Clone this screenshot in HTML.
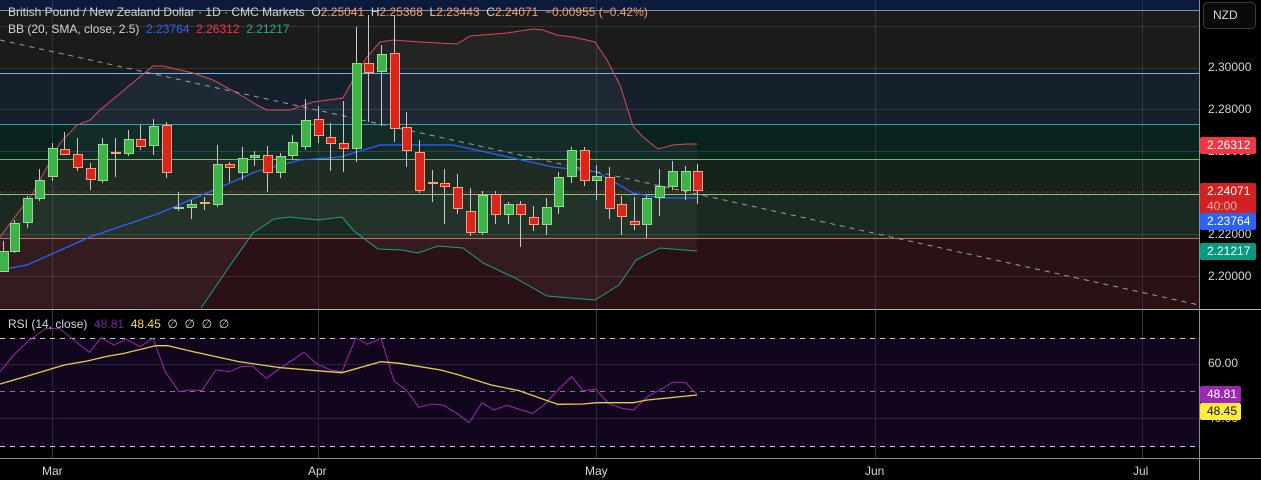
<!DOCTYPE html>
<html><head><meta charset="utf-8"><style>
html,body{margin:0;padding:0;background:#000;width:1261px;height:480px;overflow:hidden;font-family:"Liberation Sans",sans-serif}
.t{position:absolute;font-size:12px;color:#d1d4dc;white-space:nowrap}
.ax{position:absolute;left:1208px;font-size:12px;color:#d1d4dc}
.lb{position:absolute;left:1200px;font-size:12px;color:#fff;padding:1px 6px 1px 7px;border-radius:2px;line-height:15px}
</style></head><body>
<svg id="s" width="1261" height="480" style="position:absolute;left:0;top:0">
<rect x="0" y="0" width="1199" height="10" fill="#0b1a3d"/>
<rect x="0" y="10" width="1199" height="63" fill="#1b1b1c"/>
<rect x="0" y="73" width="1199" height="52" fill="#15202c"/>
<rect x="0" y="125" width="1199" height="34" fill="#0a231f"/>
<rect x="0" y="159" width="1199" height="35" fill="#16231a"/>
<rect x="0" y="194" width="1199" height="44" fill="#1b2a20"/>
<rect x="0" y="238" width="1199" height="71" fill="#2a1115"/>
<g stroke="#ffffff" stroke-opacity="0.12" stroke-width="1">
<line x1="0" y1="26.5" x2="1199" y2="26.5"/><line x1="0" y1="68.5" x2="1199" y2="68.5"/><line x1="0" y1="109.5" x2="1199" y2="109.5"/><line x1="0" y1="151.5" x2="1199" y2="151.5"/><line x1="0" y1="234.5" x2="1199" y2="234.5"/><line x1="0" y1="276.5" x2="1199" y2="276.5"/>
<line x1="52.5" y1="0" x2="52.5" y2="458"/><line x1="318.5" y1="0" x2="318.5" y2="458"/><line x1="596.5" y1="0" x2="596.5" y2="458"/><line x1="875.5" y1="0" x2="875.5" y2="458"/><line x1="1142.5" y1="0" x2="1142.5" y2="458"/>
</g>
<line x1="0" y1="10.5" x2="1199" y2="10.5" stroke="#8a8f99" stroke-width="1"/>
<line x1="0" y1="73.5" x2="1199" y2="73.5" stroke="#64b5f6" stroke-width="1"/>
<line x1="0" y1="124.5" x2="1199" y2="124.5" stroke="#26a69a" stroke-width="1"/>
<line x1="0" y1="159.5" x2="1199" y2="159.5" stroke="#66bb6a" stroke-width="1"/>
<line x1="0" y1="194.5" x2="1199" y2="194.5" stroke="#81c784" stroke-width="1"/>
<line x1="0" y1="238.5" x2="1199" y2="238.5" stroke="#ef5350" stroke-width="1"/>
<polygon fill="#ffffff" fill-opacity="0.045" points="0,237 20,210 33,193 60,143 77,125 90,120 100,110 153,66 163,66 180,70 193,73 213,80 237,93 257,105 267,110 290,110 313,102 343,98 353,80 367,57 380,42 393,40 420,42 457,44 470,36 507,33 533,29 543,30 557,35 573,37 595,42 607,60 620,85 633,126 643,137 658,149 673,145 687,144 697,144 697,251 660,248 636,260 619,285 595,300 547,296 515,278 483,263 463,248 438,246 418,253 402,250 378,249 354,231 342,217 318,220 290,217 274,219 253,233 229,267 201,308 0,308"/>
<polyline fill="none" stroke="#d84a5a" stroke-width="1" points="0,237 20,210 33,193 60,143 77,125 90,120 100,110 153,66 163,66 180,70 193,73 213,80 237,93 257,105 267,110 290,110 313,102 343,98 353,80 367,57 380,42 393,40 420,42 457,44 470,36 507,33 533,29 543,30 557,35 573,37 595,42 607,60 620,85 633,126 643,137 658,149 673,145 687,144 697,144"/>
<polyline fill="none" stroke="#1f9e8a" stroke-width="1" points="201,308 229,267 253,233 274,219 290,217 318,220 342,217 354,231 378,249 402,250 418,253 438,246 463,248 483,263 515,278 547,296 595,300 619,285 636,260 660,248 697,251"/>
<polyline fill="none" stroke="#2962ff" stroke-width="1.3" points="0,270 27,265 90,237 160,213 230,183 255,172 300,160 340,157 380,145 453,145 490,153 553,167 597,172 633,193 660,198 697,198"/>
<line x1="0" y1="40" x2="1199" y2="305" stroke="#9e9e9e" stroke-width="1" stroke-dasharray="5,5"/>
<line x1="0" y1="192" x2="1199" y2="192" stroke="#e04040" stroke-width="1" stroke-dasharray="1,2"/>
<g id="c"></g>
<line x1="0" y1="309.5" x2="1261" y2="309.5" stroke="#b2b5be" stroke-width="1"/>
<rect x="0" y="338" width="1199" height="108" fill="#12061f"/>
<g stroke="#ffffff" stroke-opacity="0.12"><line x1="0" y1="364.5" x2="1199" y2="364.5"/><line x1="0" y1="418.5" x2="1199" y2="418.5"/>
<line x1="52.5" y1="310" x2="52.5" y2="458"/><line x1="318.5" y1="310" x2="318.5" y2="458"/><line x1="596.5" y1="310" x2="596.5" y2="458"/><line x1="875.5" y1="310" x2="875.5" y2="458"/><line x1="1142.5" y1="310" x2="1142.5" y2="458"/></g>
<g stroke="#c8c8c8" stroke-dasharray="5,5" stroke-width="1"><line x1="0" y1="338.5" x2="1199" y2="338.5"/><line x1="0" y1="391.5" x2="1199" y2="391.5" stroke-opacity="0.6"/><line x1="0" y1="446.5" x2="1199" y2="446.5"/></g>
<g transform="translate(0,300) scale(0.45914,0.33333)">
<polyline fill="none" stroke="#9c27b0" stroke-width="1" vector-effect="non-scaling-stroke" points="0,215 30,165 60,125 100,85 130,85 160,120 195,157 220,113 248,135 275,118 305,140 333,115 360,215 390,275 415,270 440,272 470,210 500,215 525,200 550,198 580,235 610,205 635,182 662,157 690,192 720,210 745,215 775,113 800,133 830,115 858,243 885,270 912,322 940,312 965,315 995,340 1022,368 1050,308 1075,330 1105,316 1135,330 1160,340 1185,315 1215,270 1245,230 1270,272 1298,268 1325,310 1355,325 1380,330 1410,290 1440,268 1465,247 1493,247 1518,283"/>
<polyline fill="none" stroke="#e6cf4a" stroke-width="1.3" vector-effect="non-scaling-stroke" points="0,252 60,228 140,195 190,183 230,170 270,160 340,137 365,137 420,155 520,185 610,203 690,212 745,218 830,185 870,190 960,210 1000,225 1070,255 1130,272 1215,313 1270,312 1300,308 1380,308 1410,300 1518,285"/>
</g>
<line x1="0" y1="458.5" x2="1261" y2="458.5" stroke="#8a8f99" stroke-width="1"/>
<line x1="1199.5" y1="0" x2="1199.5" y2="480" stroke="#8a8f99" stroke-width="1"/>
<rect x="1203.5" y="2.5" width="52" height="26" rx="4" fill="#0a0a0a" stroke="#3a3a3a"/>
</svg>
<div class="t" style="left:1213px;top:8px">NZD</div>
<div class="t" style="left:8px;top:5px">British Pound / New Zealand Dollar · 1D · CMC Markets &nbsp;O<span style="color:#f0a070">2.25041</span> &nbsp;H<span style="color:#f0a070">2.25368</span> &nbsp;L<span style="color:#f0a070">2.23443</span> &nbsp;C<span style="color:#f0a070">2.24071</span> &nbsp;<span style="color:#f0a070">−0.00955 (−0.42%)</span></div>
<div class="t" style="left:8px;top:22px">BB (20, SMA, close, 2.5) &nbsp;<span style="color:#2962ff">2.23764</span> &nbsp;<span style="color:#f23645">2.26312</span> &nbsp;<span style="color:#22ab94">2.21217</span></div>
<div class="t" style="left:8px;top:317px">RSI (14, close) &nbsp;<span style="color:#7b1fa2">48.81</span> &nbsp;<span style="color:#fdd835">48.45</span> &nbsp;∅ &nbsp;∅ &nbsp;∅ &nbsp;∅</div>
<div class="ax" style="top:60px">2.30000</div>
<div class="ax" style="top:102px">2.28000</div>
<div class="ax" style="top:144px">2.26000</div>
<div class="ax" style="top:227px">2.22000</div>
<div class="ax" style="top:269px">2.20000</div>
<div class="ax" style="top:356px">60.00</div>
<div class="ax" style="top:411px">40.00</div>
<div class="lb" style="top:137px;background:#f23645">2.26312</div>
<div class="lb" style="top:183px;background:#d32020">2.24071<br><span style="color:#f7b0a8">40:00</span></div>
<div class="lb" style="top:213px;background:#2962ff">2.23764</div>
<div class="lb" style="top:243px;background:#089981">2.21217</div>
<div class="lb" style="top:386px;background:#9c27b0;padding-right:4px">48.81</div>
<div class="lb" style="top:403px;background:#ffeb3b;color:#111;padding-right:4px">48.45</div>
<div class="t" style="left:42px;top:464px">Mar</div>
<div class="t" style="left:308px;top:464px">Apr</div>
<div class="t" style="left:585px;top:464px">May</div>
<div class="t" style="left:865px;top:464px">Jun</div>
<div class="t" style="left:1133px;top:464px">Jul</div>
<script>
var d=[[2.7,251,272,241,272,1],[14.3,223,252,220,253,1],[27.3,198,223,196,228,1],[39.3,180,199,169,201,1],[52.3,148,177,143,181,1],[64.3,149,155,132,155,0],[77.3,154,168,138,171,0],[90.3,168,180,163,190,0],[102.3,144,181,138,183,1],[115.3,152,154,138,177,2],[128.3,139,154,130,156,1],[140,139,147,125,150,0],[153.3,126,146,119,155,1],[166.3,125,173,122,178,0],[178.3,207,209,192,211,1],[191.3,204,208,200,219,1],[204.3,202,204,197,210,2],[216.7,164,205,145,207,1],[229.3,164,168,162,182,0],[242.3,158,173,147,180,1],[254.3,155,158,151,166,1],[267.3,155,173,146,192,0],[280.3,156,173,153,178,1],[292.3,142,156,135,159,1],[305.3,120,147,99,150,1],[318.3,119,136,106,143,0],[330.3,137,144,123,171,0],[343.3,143,149,101,172,0],[356,63,149,27,162,1],[368,63,73,15,122,0],[381,54,72,45,126,1],[394,53,129,15,142,0],[406,127,151,112,167,0],[419,152,191,140,193,0],[432,182,184,170,202,2],[444,183,187,169,224,0],[457,187,209,174,214,0],[470,211,233,188,236,0],[482,195,233,191,235,1],[495,194,215,191,224,0],[508,204,215,202,224,1],[520,204,215,201,247,0],[533,217,225,206,231,0],[546,207,225,198,235,1],[558,177,207,172,214,1],[571,150,177,147,183,1],[584,150,181,147,186,0],[596,176,181,165,200,1],[609,177,209,167,219,0],[621,204,217,196,235,0],[634,221,225,197,230,0],[646,198,225,196,238,1],[659,186,198,169,216,1],[672,171,187,161,190,1],[685,171,191,166,200,1],[697,171,191,164,204,0]];
var g=document.getElementById('c'),h='';
d.forEach(function(c){var x=Math.round(c[0]);var fill=c[5]==1?'#3fb34a':c[5]==0?'#d9261c':'#f4a37a';var st=c[5]==1?'#8fe08a':c[5]==0?'#ffa07a':'#f4a37a';
h+='<line x1="'+(x+0.5)+'" y1="'+c[3]+'" x2="'+(x+0.5)+'" y2="'+c[4]+'" stroke="#c8c8c8" stroke-width="1"/>';
h+='<rect x="'+(x-3.5)+'" y="'+(c[1]+0.5)+'" width="9" height="'+Math.max(c[2]-c[1]-1,1)+'" fill="'+fill+'" stroke="'+st+'" stroke-width="1"/>';});
g.innerHTML=h;
</script>
</body></html>
